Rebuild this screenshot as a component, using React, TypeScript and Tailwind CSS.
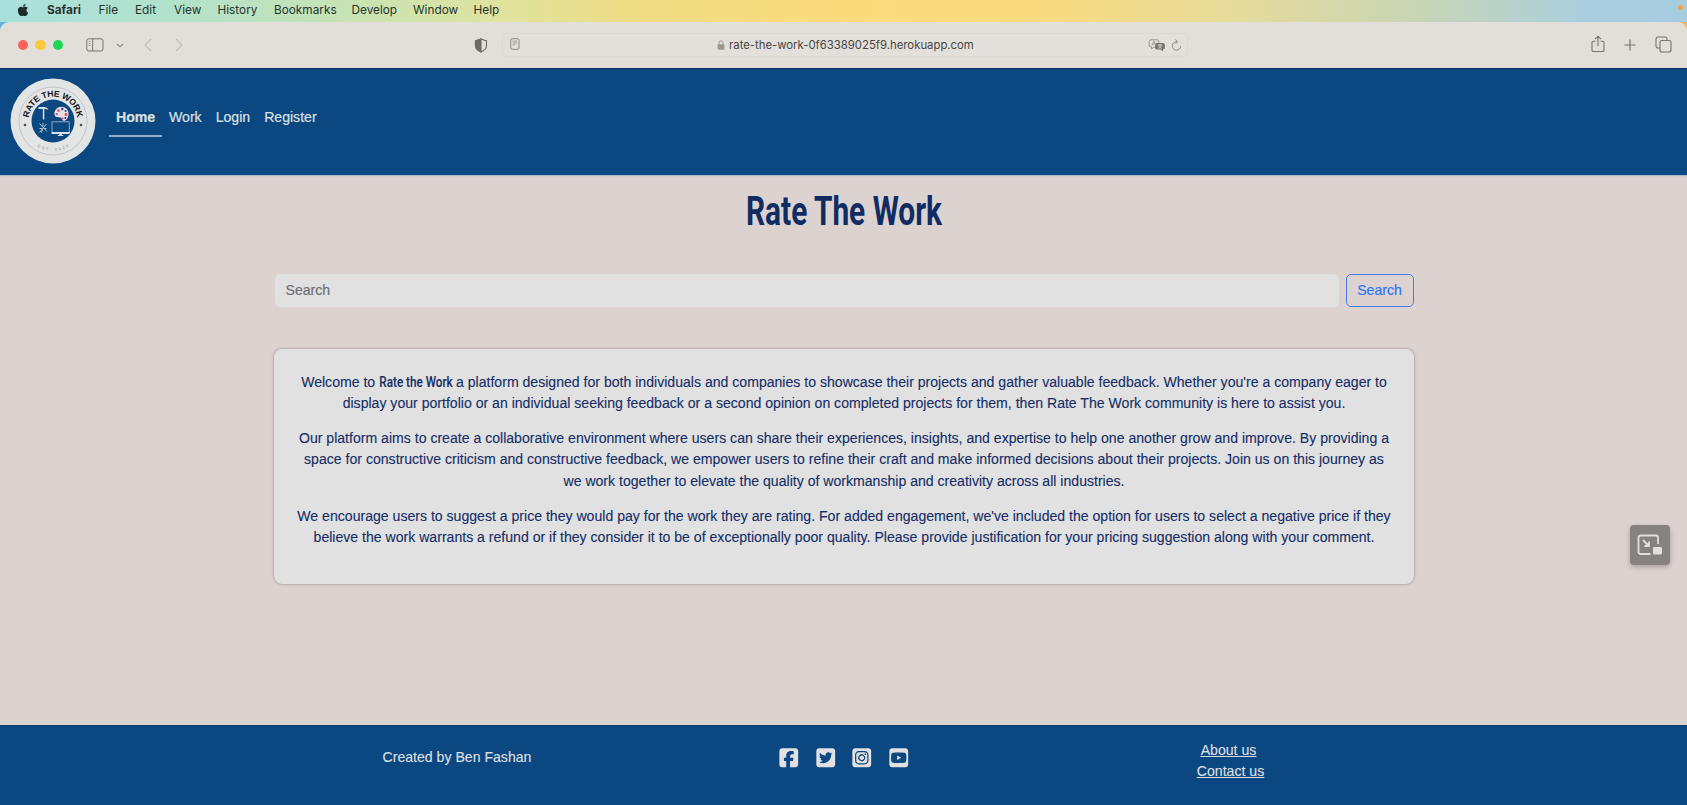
import { FaSquareFacebook, FaSquareTwitter, FaSquareInstagram, FaSquareYoutube, FaApple } from "react-icons/fa6";

const menus = [
  { label: "File", w: "w-[36.500px]" },
  { label: "Edit", w: "w-[39px]" },
  { label: "View", w: "w-[43.500px]" },
  { label: "History", w: "w-[56.500px]" },
  { label: "Bookmarks", w: "w-[77.500px]" },
  { label: "Develop", w: "w-[61.500px]" },
  { label: "Window", w: "w-[60.500px]" },
  { label: "Help", w: "w-[40px]" },
];

function MenuBar() {
  return (
    <div className="flex h-[22px] shrink-0 items-start bg-[linear-gradient(90deg,#a9e0dc_0%,#b2e2cb_10%,#c6e3b6_20%,#dee3a0_29%,#f0dd84_38%,#fadb7c_50%,#f8db80_62%,#e9dc98_72%,#c8d5b5_84%,#aacfdf_94%,#a6cce0_100%)] font-['Inter'] text-[11.800px] leading-[21px] text-[#26332c]">
      <FaApple className="mt-[3px] ml-[16px] size-[14px] text-[#1d2a28]" />
      <span className="ml-[17px] w-[51.500px] font-bold">Safari</span>
      {menus.map((m) => (
        <span key={m.label} className={m.w}>{m.label}</span>
      ))}
      <span className="mt-[5px] mr-[4px] ml-auto size-[5px] rounded-full bg-[#f5a33c]" />
    </div>
  );
}

function Toolbar() {
  return (
    <div className="flex h-[46px] shrink-0 bg-[linear-gradient(90deg,#62b5e3_0%,#62b5e3_50%,#e9b765_50%,#e9b765_100%)]">
      <div className="flex h-[46px] w-full items-center rounded-t-[9px] bg-[#e2dfda] text-[#77736e]">
        <div className="ml-[17.500px] flex gap-[7px]">
          <span className="size-[10.500px] rounded-full bg-[#fc615a]" />
          <span className="size-[10.500px] rounded-full bg-[#fdc93c]" />
          <span className="size-[10.500px] rounded-full bg-[#1fd653]" />
        </div>
        <svg className="ml-[23px] h-[14px] w-[18px]" viewBox="0 0 18 14" fill="none" stroke="currentColor">
          <rect x=".8" y=".8" width="16.2" height="12.2" rx="2" />
          <path d="M6.700 1v12" />
          <path d="M2.800 3.500h1.500M2.800 5.500h1.500M2.800 7.500h1.500" strokeWidth=".7" />
        </svg>
        <svg className="ml-[12px] h-[5px] w-[8px]" viewBox="0 0 8 5" fill="none" stroke="#908c87" strokeWidth="1.200"><path d="M1 1l3 2.600L7 1" /></svg>
        <svg className="ml-[20px] h-[14px] w-[8px]" viewBox="0 0 8 14" fill="none" stroke="#c2beb9" strokeWidth="1.200"><path d="M7 1L1 7l6 6" /></svg>
        <svg className="ml-[23px] h-[14px] w-[8px]" viewBox="0 0 8 14" fill="none" stroke="#c2beb9" strokeWidth="1.200"><path d="M1 1l6 6-6 6" /></svg>
        <svg className="ml-[291px] h-[15px] w-[14px]" viewBox="0 0 14 15" fill="none" stroke="#6d6963" strokeWidth="1.100">
          <path d="M7 1L12.500 3v4.500c0 3-2.500 5.200-5.500 6.500-3-1.300-5.500-3.500-5.500-6.500V3z" />
          <path d="M7 1L1.500 3v4.500c0 3 2.500 5.200 5.500 6.500z" fill="#6d6963" />
        </svg>
        <div className="ml-[13.500px] flex h-[24px] w-[686px] items-center rounded-[5px] border border-[#dcd9d4] bg-[#e3e0db]">
          <svg className="mb-[2px] ml-[7px] h-[12px] w-[10px]" viewBox="0 0 10 12" fill="none" stroke="#85817c" strokeWidth=".9">
            <rect x=".7" y=".7" width="8.300" height="10.600" rx="1.300" />
            <path d="M2.600 3h4.500M2.600 4.900h4.500M2.600 6.800h2.600" strokeWidth=".7" />
          </svg>
          <svg className="ml-[197px] h-[10px] w-[8px]" viewBox="0 0 8 10" fill="#9b9792">
            <rect x=".6" y="4.300" width="6.800" height="5.500" rx="1" />
            <path d="M2 4.500V2.800a2 2 0 014 0v1.700" fill="none" stroke="#9b9792" />
          </svg>
          <span className="ml-[4.500px] w-[244px] whitespace-nowrap font-['Inter'] text-[11.330px] leading-[16px] text-[#474541]">rate-the-work-0f63389025f9.herokuapp.com</span>
          <svg className="ml-[175px] h-[13px] w-[18px]" viewBox="0 0 18 13">
            <path d="M3 .8h6a1.800 1.800 0 011.800 1.800V8H6L3.700 10V8H3a1.800 1.800 0 01-1.800-1.800V2.600A1.800 1.800 0 013 .8z" fill="none" stroke="#85817c" strokeWidth=".8" />
            <path d="M4 6.400L6 2.200l1.500 3.500M4.700 5h2.400" fill="none" stroke="#85817c" strokeWidth=".7" />
            <path d="M9 4h6a1.800 1.800 0 011.800 1.800v3A1.800 1.800 0 0115 10.600v1.900l-2.300-1.900H9a1.800 1.800 0 01-1.800-1.800v-3A1.800 1.800 0 019 4z" fill="#77736e" />
            <path d="M9.700 6h4.600M12 5v1M10.200 9.300c2-.6 2.900-1.700 3.200-3.300M10.600 6.200c.4 1.600 1.500 2.600 3.200 3.100" fill="none" stroke="#e2dfda" strokeWidth=".8" />
          </svg>
          <svg className="ml-[5px] h-[13px] w-[11px]" viewBox="0 0 11 13" fill="none" stroke="#85817c" strokeWidth=".9">
            <path d="M6 2.800A4.200 4.200 0 109.700 7M4.400.7l2.200 2.100-2.200 2.200" />
          </svg>
        </div>
        <svg className="mb-[2px] ml-auto h-[18px] w-[14px]" viewBox="0 0 14 18" fill="none" stroke="currentColor" strokeWidth="1.100">
          <path d="M4.500 6.300H2.300c-.8 0-1.300.5-1.300 1.300v7.600c0 .8.500 1.300 1.300 1.300h9.400c.8 0 1.300-.5 1.300-1.300V7.600c0-.8-.5-1.300-1.300-1.300H9.500M7 11V1.300M4 4.200l3-3 3 3" />
        </svg>
        <svg className="ml-[19px] size-[12px]" viewBox="0 0 12 12" fill="none" stroke="currentColor" strokeWidth="1.200"><path d="M6 .5v11M.5 6h11" /></svg>
        <svg className="mr-[15px] mb-[2px] ml-[19px] size-[17px]" viewBox="0 0 17 17" fill="none" stroke="currentColor" strokeWidth="1.100">
          <rect x="5" y="4.500" width="11" height="11.500" rx="2" />
          <path d="M5 12H3a2 2 0 01-2-2V3a2 2 0 012-2h7a2 2 0 012 2v1.500" />
        </svg>
      </div>
    </div>
  );
}

function Logo() {
  return (
    <svg className="mb-[3px] size-[86px] shrink-0" viewBox="-43 -43 86 86">
      <circle r="42.500" fill="#e3e4e4" />
      <circle r="34" fill="none" stroke="#9ea3a8" strokeWidth=".5" />
      <circle r="21.500" fill="#0b4880" />
      <defs>
        <path id="arcTop" d="M-23.980 5.100A24.500 24.500 0 1123.980 5.100" />
        <path id="arcBottom" d="M-30 0A30 30 0 0030 0" />
      </defs>
      <text fontFamily="Liberation Sans" fontWeight="700" fontSize="8.600" fill="#151515" textAnchor="middle">
        <textPath href="#arcTop" startOffset="50%" textLength="70">RATE THE WORK</textPath>
      </text>
      <text fontFamily="Liberation Sans" fontSize="4" fill="#8b8b8b" textAnchor="middle">
        <textPath href="#arcBottom" startOffset="50%" textLength="33">EST. 2024</textPath>
      </text>
      <path d="M-28 2.300l.6 1.100 1.100.6-1.100.6-.6 1.100-.6-1.100-1.100-.6 1.100-.6zM28 2.300l.6 1.100 1.100.6-1.100.6L28 5.700l-.6-1.100-1.100-.6 1.100-.6z" fill="#111" />
      <path d="M-14.500-14h6q3 .2 4 3-2-1.300-4.200-1v10.500h-1.500v-10.500h-4.300z" fill="#d5dce2" />
      <path d="M8.500-14.300c4.200 0 7 3 7 6.800S13.700-.2 10.500-.2c-2 0-.8-2.500-2.800-3.200C5.500-4 1.600-3.200 1.400-7.300 1.300-11 4.500-14.300 8.500-14.300z" fill="#eadfe4" />
      <g fill="#df4b55"><circle cx="5.500" cy="-10.500" r="1.300" /><circle cx="3.800" cy="-6.800" r="1.100" /><circle cx="13" cy="-6.500" r="1.400" /><circle cx="9.500" cy="-2.500" r="1.100" /></g>
      <g fill="#294caa"><circle cx="9.300" cy="-12" r="1.300" /><circle cx="12.500" cy="-10" r="1.100" /><circle cx="12.300" cy="-3" r="1.100" /></g>
      <path d="M-13.500 2.500l7.500 8M-6.500 3l-7 8.500M-10 2v3.500M-13.500 7.500h3M-6.500 7.500h-3M-10.500 8.500l-1 3" stroke="#b9c6d1" fill="none" strokeWidth="1" />
      <rect x="-1" y=".8" width="17.200" height="10.700" fill="none" stroke="#aabed2" strokeWidth=".8" />
      <path d="M-1.400 11h18v2h-18zM6.300 13h2.500v1.300h-2.500zM4.800 14h5.500v.9H4.800z" fill="#dce1e5" />
    </svg>
  );
}

function Navbar() {
  return (
    <header className="relative flex h-[107px] shrink-0 items-center border-t border-[#0b2f5e] bg-[#0b4780] pl-[10px] text-[14.100px] leading-[21px] text-[#dde0e3] shadow-[0_1px_1px_#a9bdd2] [-webkit-text-stroke:0.200px]">
      <Logo />
      <nav className="mb-[12px] ml-[13px] flex">
        <a className="-mb-px w-[53px] border-b-2 border-[#8fabc6] px-[7px] pt-[10px] pb-[7px] font-bold">Home</a>
        <a className="ml-[7px] pt-[10px]">Work</a>
        <a className="ml-[14px] pt-[10px]">Login</a>
        <a className="ml-[14px] pt-[10px]">Register</a>
      </nav>
    </header>
  );
}

function Main() {
  return (
    <main className="flex flex-1 flex-col items-center bg-[#dcd3d1]">
      <h1 className="mt-[9px] w-[294px] origin-center scale-x-[0.737] text-center font-['Roboto'] text-[40.500px] leading-[54px] font-bold whitespace-nowrap text-[#102c63]">Rate The Work</h1>
      <div className="ml-px mt-[36px] flex h-[33px] w-[1139px]">
        <div className="flex w-[1064px] items-center rounded-[5px] bg-[#e1e1e1] pl-[11px] text-[14.100px] text-[#6b6e71] [-webkit-text-stroke:0.150px]">Search</div>
        <button className="ml-[7px] w-[68px] rounded-[5px] border border-[#4680ef] text-[14.100px] text-[#2e75f3] [-webkit-text-stroke:0.200px]">Search</button>
      </div>
      <section className="mt-[42px] ml-px h-[235px] w-[1140px] rounded-[8px] bg-[#e1e1e1] pt-[23px] text-center text-[14.080px] leading-[21.150px] whitespace-nowrap text-[#142d66] shadow-[0_0_3px_rgba(60,50,50,0.5)] [-webkit-text-stroke:0.100px]">
        <p>
          Welcome to <span className="inline-flex w-[73px] justify-center"><span className="scale-x-[0.780] font-['Roboto'] text-[15px] font-medium">Rate the Work</span></span> a platform designed for both individuals and companies to showcase their projects and gather valuable feedback. Whether you're a company eager to
          <br />
          display your portfolio or an individual seeking feedback or a second opinion on completed projects for them, then Rate The Work community is here to assist you.
        </p>
        <p className="mt-[14px]">
          Our platform aims to create a collaborative environment where users can share their experiences, insights, and expertise to help one another grow and improve. By providing a
          <br />
          space for constructive criticism and constructive feedback, we empower users to refine their craft and make informed decisions about their projects. Join us on this journey as
          <br />
          we work together to elevate the quality of workmanship and creativity across all industries.
        </p>
        <p className="mt-[14px]">
          We encourage users to suggest a price they would pay for the work they are rating. For added engagement, we've included the option for users to select a negative price if they
          <br />
          believe the work warrants a refund or if they consider it to be of exceptionally poor quality. Please provide justification for your pricing suggestion along with your comment.
        </p>
      </section>
    </main>
  );
}

function Footer() {
  return (
    <footer className="grid h-[80px] shrink-0 grid-cols-[387px_387px_387px] justify-center border-t border-[#123b6b] bg-[#0b4780] pt-[14px] text-center text-[14.100px] leading-[21px] text-[#dcdfe2] [-webkit-text-stroke:0.150px]">
      <p className="pt-[7px] pl-px">Created by Ben Fashan</p>
      <div className="flex justify-center gap-[15px] pt-[7px] text-[21.500px] text-[#e1e1e1] [-webkit-text-stroke:0]">
        <FaSquareFacebook />
        <FaSquareTwitter />
        <FaSquareInstagram />
        <FaSquareYoutube />
      </div>
      <div className="flex flex-col items-center underline">
        <a className="mr-[4px]">About us</a>
        <a>Contact us</a>
      </div>
    </footer>
  );
}

export default function App() {
  return (
    <div className="flex h-[805px] w-[1687px] flex-col overflow-hidden bg-[#dcd3d1] font-['Liberation_Sans',sans-serif]">
      <MenuBar />
      <Toolbar />
      <Navbar />
      <Main />
      <Footer />
      <button className="absolute top-[525px] left-[1630px] flex size-[40px] items-center justify-center rounded-[4px] bg-[#878180] shadow-[0_2px_5px_rgba(80,60,60,0.35)]" aria-label="Picture in picture">
        <svg className="h-[22px] w-[26px]" viewBox="0 0 26 22" fill="none" stroke="#e2e0df" strokeWidth="1.800">
          <path d="M13.500 20H3.500a2 2 0 01-2-2V3.500a2 2 0 012-2h15.500a2 2 0 012 2v6.500" />
          <path d="M6 6l6 6M12 7.500V12H7.500" />
          <rect x="16.500" y="13.500" width="8" height="6.500" rx=".5" fill="#e2e0df" stroke="#e2e0df" strokeWidth="1" />
        </svg>
      </button>
    </div>
  );
}
